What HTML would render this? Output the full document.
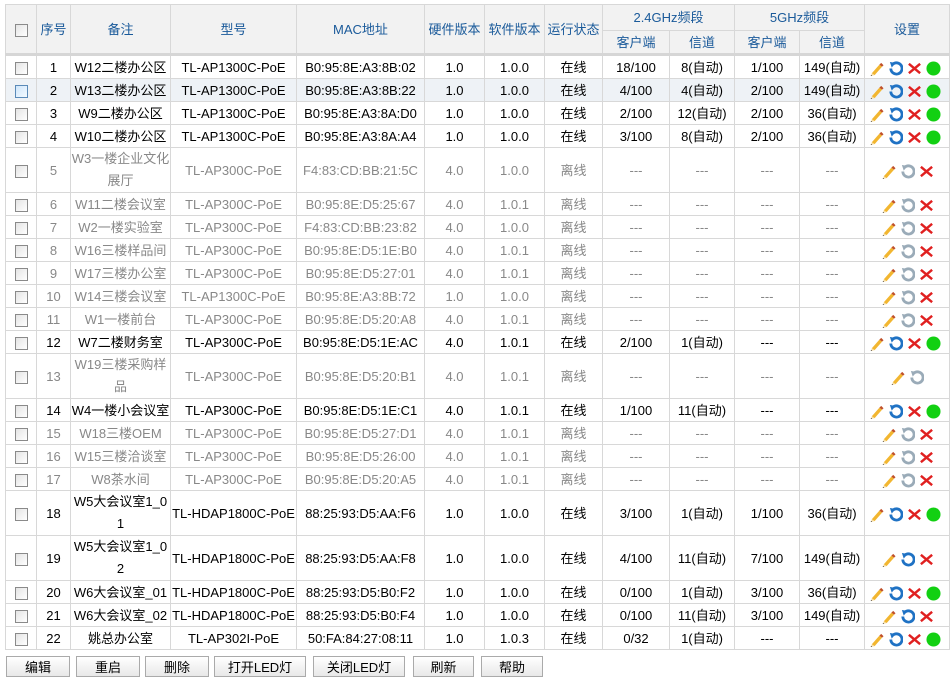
<!DOCTYPE html>
<html><head><meta charset="utf-8"><style>
body{margin:0;background:#fff;font-family:"Liberation Sans","Noto Sans CJK SC",sans-serif;font-size:13px;color:#000;width:951px;height:677px;overflow:hidden;position:relative}
table{position:absolute;left:5px;top:4px;border-collapse:collapse;table-layout:fixed;width:944px}
td,th{border:1px solid #d8d8d8;text-align:center;padding:0;white-space:nowrap;overflow:hidden;line-height:21px}
th{background:#f2f2f2;color:#1a5a9a;font-weight:normal;font-size:13px}
thead tr:last-child th, thead th[rowspan]{border-bottom:3px solid #d6d6d6}
tr.h1 th{height:25px}
tr.h2 th{height:22px}
tbody td{height:22px}
tbody tr.t td{height:44px}
tr.off td{color:#888}
tr.sel td{background:#eef2f6}
td.w{white-space:normal;line-height:22px}
.cb{display:inline-block;width:11px;height:11px;border:1px solid #8a8a8a;background:linear-gradient(135deg,#e4e4e4,#fff);vertical-align:middle}
tr.sel .cb{border-color:#5a8ab8;background:linear-gradient(135deg,#cfe6fb,#f4faff)}
.ic{display:inline-block;vertical-align:middle;margin:0 2px}
td.s{text-align:left;padding-left:2px}
.btns{position:absolute;top:656px;left:0}
.btns span{position:absolute;top:0;height:21px;border:1px solid #aaa;background:linear-gradient(#fff,#e8e8e8);text-align:center;line-height:21px;font-size:13px;box-sizing:border-box}
</style></head><body>
<svg width="0" height="0" style="position:absolute">
<defs>
<symbol id="p" viewBox="0 0 16 16"><path d="M3 13 L11 4 L14 6 L6 15 Z" fill="#f2b630"/><path d="M11 4 L13 2 L15.5 4.5 L14 6 Z" fill="#c0502a"/><path d="M3 13 L6 15 L2 16 Z" fill="#f6dca0"/><path d="M2 16 L3 15.5" stroke="#333"/></symbol>
<symbol id="r" viewBox="0 0 16 16"><path d="M5 3.5 A6 6 0 1 1 3 8" fill="none" stroke="#1f72c4" stroke-width="3"/><path d="M2 1 L8 2 L4 7 Z" fill="#1f72c4"/></symbol>
<symbol id="g" viewBox="0 0 16 16"><path d="M5 3.5 A6 6 0 1 1 3 8" fill="none" stroke="#9aabb8" stroke-width="3"/><path d="M2 1 L8 2 L4 7 Z" fill="#9aabb8"/></symbol>
<symbol id="x" viewBox="0 0 16 16"><path d="M2 3 L14 13 M14 3 L2 13" stroke="#e02020" stroke-width="2.6"/></symbol>
<symbol id="d" viewBox="0 0 16 16"><circle cx="8" cy="8" r="7.5" fill="#12d012"/></symbol>
</defs></svg>
<table>
<colgroup><col style="width:31px"><col style="width:34px"><col style="width:100px"><col style="width:126px"><col style="width:128px"><col style="width:60px"><col style="width:60px"><col style="width:58px"><col style="width:67px"><col style="width:65px"><col style="width:65px"><col style="width:65px"><col style="width:85px"></colgroup>
<thead>
<tr class="h1"><th rowspan="2"><span class="cb"></span></th><th rowspan="2">序号</th><th rowspan="2">备注</th><th rowspan="2">型号</th><th rowspan="2">MAC地址</th><th rowspan="2">硬件版本</th><th rowspan="2">软件版本</th><th rowspan="2">运行状态</th><th colspan="2">2.4GHz频段</th><th colspan="2">5GHz频段</th><th rowspan="2">设置</th></tr>
<tr class="h2"><th>客户端</th><th>信道</th><th>客户端</th><th>信道</th></tr>
</thead>
<tbody>
<tr><td><span class="cb"></span></td><td>1</td><td>W12二楼办公区</td><td>TL-AP1300C-PoE</td><td>B0:95:8E:A3:8B:02</td><td>1.0</td><td>1.0.0</td><td>在线</td><td>18/100</td><td>8(自动)</td><td>1/100</td><td>149(自动)</td><td class="s"><svg class="ic" width="15" height="15"><use href="#p"/></svg><svg class="ic" width="15" height="15"><use href="#r"/></svg><svg class="ic" width="15" height="15"><use href="#x"/></svg><svg class="ic" width="15" height="15"><use href="#d"/></svg></td></tr>
<tr class="sel"><td><span class="cb"></span></td><td>2</td><td>W13二楼办公区</td><td>TL-AP1300C-PoE</td><td>B0:95:8E:A3:8B:22</td><td>1.0</td><td>1.0.0</td><td>在线</td><td>4/100</td><td>4(自动)</td><td>2/100</td><td>149(自动)</td><td class="s"><svg class="ic" width="15" height="15"><use href="#p"/></svg><svg class="ic" width="15" height="15"><use href="#r"/></svg><svg class="ic" width="15" height="15"><use href="#x"/></svg><svg class="ic" width="15" height="15"><use href="#d"/></svg></td></tr>
<tr><td><span class="cb"></span></td><td>3</td><td>W9二楼办公区</td><td>TL-AP1300C-PoE</td><td>B0:95:8E:A3:8A:D0</td><td>1.0</td><td>1.0.0</td><td>在线</td><td>2/100</td><td>12(自动)</td><td>2/100</td><td>36(自动)</td><td class="s"><svg class="ic" width="15" height="15"><use href="#p"/></svg><svg class="ic" width="15" height="15"><use href="#r"/></svg><svg class="ic" width="15" height="15"><use href="#x"/></svg><svg class="ic" width="15" height="15"><use href="#d"/></svg></td></tr>
<tr><td><span class="cb"></span></td><td>4</td><td>W10二楼办公区</td><td>TL-AP1300C-PoE</td><td>B0:95:8E:A3:8A:A4</td><td>1.0</td><td>1.0.0</td><td>在线</td><td>3/100</td><td>8(自动)</td><td>2/100</td><td>36(自动)</td><td class="s"><svg class="ic" width="15" height="15"><use href="#p"/></svg><svg class="ic" width="15" height="15"><use href="#r"/></svg><svg class="ic" width="15" height="15"><use href="#x"/></svg><svg class="ic" width="15" height="15"><use href="#d"/></svg></td></tr>
<tr class="off t"><td><span class="cb"></span></td><td>5</td><td class="w">W3一楼企业文化<br>展厅</td><td>TL-AP300C-PoE</td><td>F4:83:CD:BB:21:5C</td><td>4.0</td><td>1.0.0</td><td>离线</td><td>---</td><td>---</td><td>---</td><td>---</td><td><svg class="ic" width="15" height="15"><use href="#p"/></svg><svg class="ic" width="15" height="15"><use href="#g"/></svg><svg class="ic" width="15" height="15"><use href="#x"/></svg></td></tr>
<tr class="off"><td><span class="cb"></span></td><td>6</td><td>W11二楼会议室</td><td>TL-AP300C-PoE</td><td>B0:95:8E:D5:25:67</td><td>4.0</td><td>1.0.1</td><td>离线</td><td>---</td><td>---</td><td>---</td><td>---</td><td><svg class="ic" width="15" height="15"><use href="#p"/></svg><svg class="ic" width="15" height="15"><use href="#g"/></svg><svg class="ic" width="15" height="15"><use href="#x"/></svg></td></tr>
<tr class="off"><td><span class="cb"></span></td><td>7</td><td>W2一楼实验室</td><td>TL-AP300C-PoE</td><td>F4:83:CD:BB:23:82</td><td>4.0</td><td>1.0.0</td><td>离线</td><td>---</td><td>---</td><td>---</td><td>---</td><td><svg class="ic" width="15" height="15"><use href="#p"/></svg><svg class="ic" width="15" height="15"><use href="#g"/></svg><svg class="ic" width="15" height="15"><use href="#x"/></svg></td></tr>
<tr class="off"><td><span class="cb"></span></td><td>8</td><td>W16三楼样品间</td><td>TL-AP300C-PoE</td><td>B0:95:8E:D5:1E:B0</td><td>4.0</td><td>1.0.1</td><td>离线</td><td>---</td><td>---</td><td>---</td><td>---</td><td><svg class="ic" width="15" height="15"><use href="#p"/></svg><svg class="ic" width="15" height="15"><use href="#g"/></svg><svg class="ic" width="15" height="15"><use href="#x"/></svg></td></tr>
<tr class="off"><td><span class="cb"></span></td><td>9</td><td>W17三楼办公室</td><td>TL-AP300C-PoE</td><td>B0:95:8E:D5:27:01</td><td>4.0</td><td>1.0.1</td><td>离线</td><td>---</td><td>---</td><td>---</td><td>---</td><td><svg class="ic" width="15" height="15"><use href="#p"/></svg><svg class="ic" width="15" height="15"><use href="#g"/></svg><svg class="ic" width="15" height="15"><use href="#x"/></svg></td></tr>
<tr class="off"><td><span class="cb"></span></td><td>10</td><td>W14三楼会议室</td><td>TL-AP1300C-PoE</td><td>B0:95:8E:A3:8B:72</td><td>1.0</td><td>1.0.0</td><td>离线</td><td>---</td><td>---</td><td>---</td><td>---</td><td><svg class="ic" width="15" height="15"><use href="#p"/></svg><svg class="ic" width="15" height="15"><use href="#g"/></svg><svg class="ic" width="15" height="15"><use href="#x"/></svg></td></tr>
<tr class="off"><td><span class="cb"></span></td><td>11</td><td>W1一楼前台</td><td>TL-AP300C-PoE</td><td>B0:95:8E:D5:20:A8</td><td>4.0</td><td>1.0.1</td><td>离线</td><td>---</td><td>---</td><td>---</td><td>---</td><td><svg class="ic" width="15" height="15"><use href="#p"/></svg><svg class="ic" width="15" height="15"><use href="#g"/></svg><svg class="ic" width="15" height="15"><use href="#x"/></svg></td></tr>
<tr><td><span class="cb"></span></td><td>12</td><td>W7二楼财务室</td><td>TL-AP300C-PoE</td><td>B0:95:8E:D5:1E:AC</td><td>4.0</td><td>1.0.1</td><td>在线</td><td>2/100</td><td>1(自动)</td><td>---</td><td>---</td><td class="s"><svg class="ic" width="15" height="15"><use href="#p"/></svg><svg class="ic" width="15" height="15"><use href="#r"/></svg><svg class="ic" width="15" height="15"><use href="#x"/></svg><svg class="ic" width="15" height="15"><use href="#d"/></svg></td></tr>
<tr class="off t"><td><span class="cb"></span></td><td>13</td><td class="w">W19三楼采购样<br>品</td><td>TL-AP300C-PoE</td><td>B0:95:8E:D5:20:B1</td><td>4.0</td><td>1.0.1</td><td>离线</td><td>---</td><td>---</td><td>---</td><td>---</td><td><svg class="ic" width="15" height="15"><use href="#p"/></svg><svg class="ic" width="15" height="15"><use href="#g"/></svg></td></tr>
<tr><td><span class="cb"></span></td><td>14</td><td>W4一楼小会议室</td><td>TL-AP300C-PoE</td><td>B0:95:8E:D5:1E:C1</td><td>4.0</td><td>1.0.1</td><td>在线</td><td>1/100</td><td>11(自动)</td><td>---</td><td>---</td><td class="s"><svg class="ic" width="15" height="15"><use href="#p"/></svg><svg class="ic" width="15" height="15"><use href="#r"/></svg><svg class="ic" width="15" height="15"><use href="#x"/></svg><svg class="ic" width="15" height="15"><use href="#d"/></svg></td></tr>
<tr class="off"><td><span class="cb"></span></td><td>15</td><td>W18三楼OEM</td><td>TL-AP300C-PoE</td><td>B0:95:8E:D5:27:D1</td><td>4.0</td><td>1.0.1</td><td>离线</td><td>---</td><td>---</td><td>---</td><td>---</td><td><svg class="ic" width="15" height="15"><use href="#p"/></svg><svg class="ic" width="15" height="15"><use href="#g"/></svg><svg class="ic" width="15" height="15"><use href="#x"/></svg></td></tr>
<tr class="off"><td><span class="cb"></span></td><td>16</td><td>W15三楼洽谈室</td><td>TL-AP300C-PoE</td><td>B0:95:8E:D5:26:00</td><td>4.0</td><td>1.0.1</td><td>离线</td><td>---</td><td>---</td><td>---</td><td>---</td><td><svg class="ic" width="15" height="15"><use href="#p"/></svg><svg class="ic" width="15" height="15"><use href="#g"/></svg><svg class="ic" width="15" height="15"><use href="#x"/></svg></td></tr>
<tr class="off"><td><span class="cb"></span></td><td>17</td><td>W8茶水间</td><td>TL-AP300C-PoE</td><td>B0:95:8E:D5:20:A5</td><td>4.0</td><td>1.0.1</td><td>离线</td><td>---</td><td>---</td><td>---</td><td>---</td><td><svg class="ic" width="15" height="15"><use href="#p"/></svg><svg class="ic" width="15" height="15"><use href="#g"/></svg><svg class="ic" width="15" height="15"><use href="#x"/></svg></td></tr>
<tr class="t"><td><span class="cb"></span></td><td>18</td><td class="w">W5大会议室1_0<br>1</td><td>TL-HDAP1800C-PoE</td><td>88:25:93:D5:AA:F6</td><td>1.0</td><td>1.0.0</td><td>在线</td><td>3/100</td><td>1(自动)</td><td>1/100</td><td>36(自动)</td><td class="s"><svg class="ic" width="15" height="15"><use href="#p"/></svg><svg class="ic" width="15" height="15"><use href="#r"/></svg><svg class="ic" width="15" height="15"><use href="#x"/></svg><svg class="ic" width="15" height="15"><use href="#d"/></svg></td></tr>
<tr class="t"><td><span class="cb"></span></td><td>19</td><td class="w">W5大会议室1_0<br>2</td><td>TL-HDAP1800C-PoE</td><td>88:25:93:D5:AA:F8</td><td>1.0</td><td>1.0.0</td><td>在线</td><td>4/100</td><td>11(自动)</td><td>7/100</td><td>149(自动)</td><td><svg class="ic" width="15" height="15"><use href="#p"/></svg><svg class="ic" width="15" height="15"><use href="#r"/></svg><svg class="ic" width="15" height="15"><use href="#x"/></svg></td></tr>
<tr><td><span class="cb"></span></td><td>20</td><td>W6大会议室_01</td><td>TL-HDAP1800C-PoE</td><td>88:25:93:D5:B0:F2</td><td>1.0</td><td>1.0.0</td><td>在线</td><td>0/100</td><td>1(自动)</td><td>3/100</td><td>36(自动)</td><td class="s"><svg class="ic" width="15" height="15"><use href="#p"/></svg><svg class="ic" width="15" height="15"><use href="#r"/></svg><svg class="ic" width="15" height="15"><use href="#x"/></svg><svg class="ic" width="15" height="15"><use href="#d"/></svg></td></tr>
<tr><td><span class="cb"></span></td><td>21</td><td>W6大会议室_02</td><td>TL-HDAP1800C-PoE</td><td>88:25:93:D5:B0:F4</td><td>1.0</td><td>1.0.0</td><td>在线</td><td>0/100</td><td>11(自动)</td><td>3/100</td><td>149(自动)</td><td><svg class="ic" width="15" height="15"><use href="#p"/></svg><svg class="ic" width="15" height="15"><use href="#r"/></svg><svg class="ic" width="15" height="15"><use href="#x"/></svg></td></tr>
<tr><td><span class="cb"></span></td><td>22</td><td>姚总办公室</td><td>TL-AP302I-PoE</td><td>50:FA:84:27:08:11</td><td>1.0</td><td>1.0.3</td><td>在线</td><td>0/32</td><td>1(自动)</td><td>---</td><td>---</td><td class="s"><svg class="ic" width="15" height="15"><use href="#p"/></svg><svg class="ic" width="15" height="15"><use href="#r"/></svg><svg class="ic" width="15" height="15"><use href="#x"/></svg><svg class="ic" width="15" height="15"><use href="#d"/></svg></td></tr>
</tbody></table>
<div class="btns">
<span style="left:6px;width:64px">编辑</span>
<span style="left:76px;width:64px">重启</span>
<span style="left:145px;width:64px">删除</span>
<span style="left:214px;width:92px">打开LED灯</span>
<span style="left:313px;width:92px">关闭LED灯</span>
<span style="left:413px;width:61px">刷新</span>
<span style="left:481px;width:62px">帮助</span>
</div>
</body></html>
